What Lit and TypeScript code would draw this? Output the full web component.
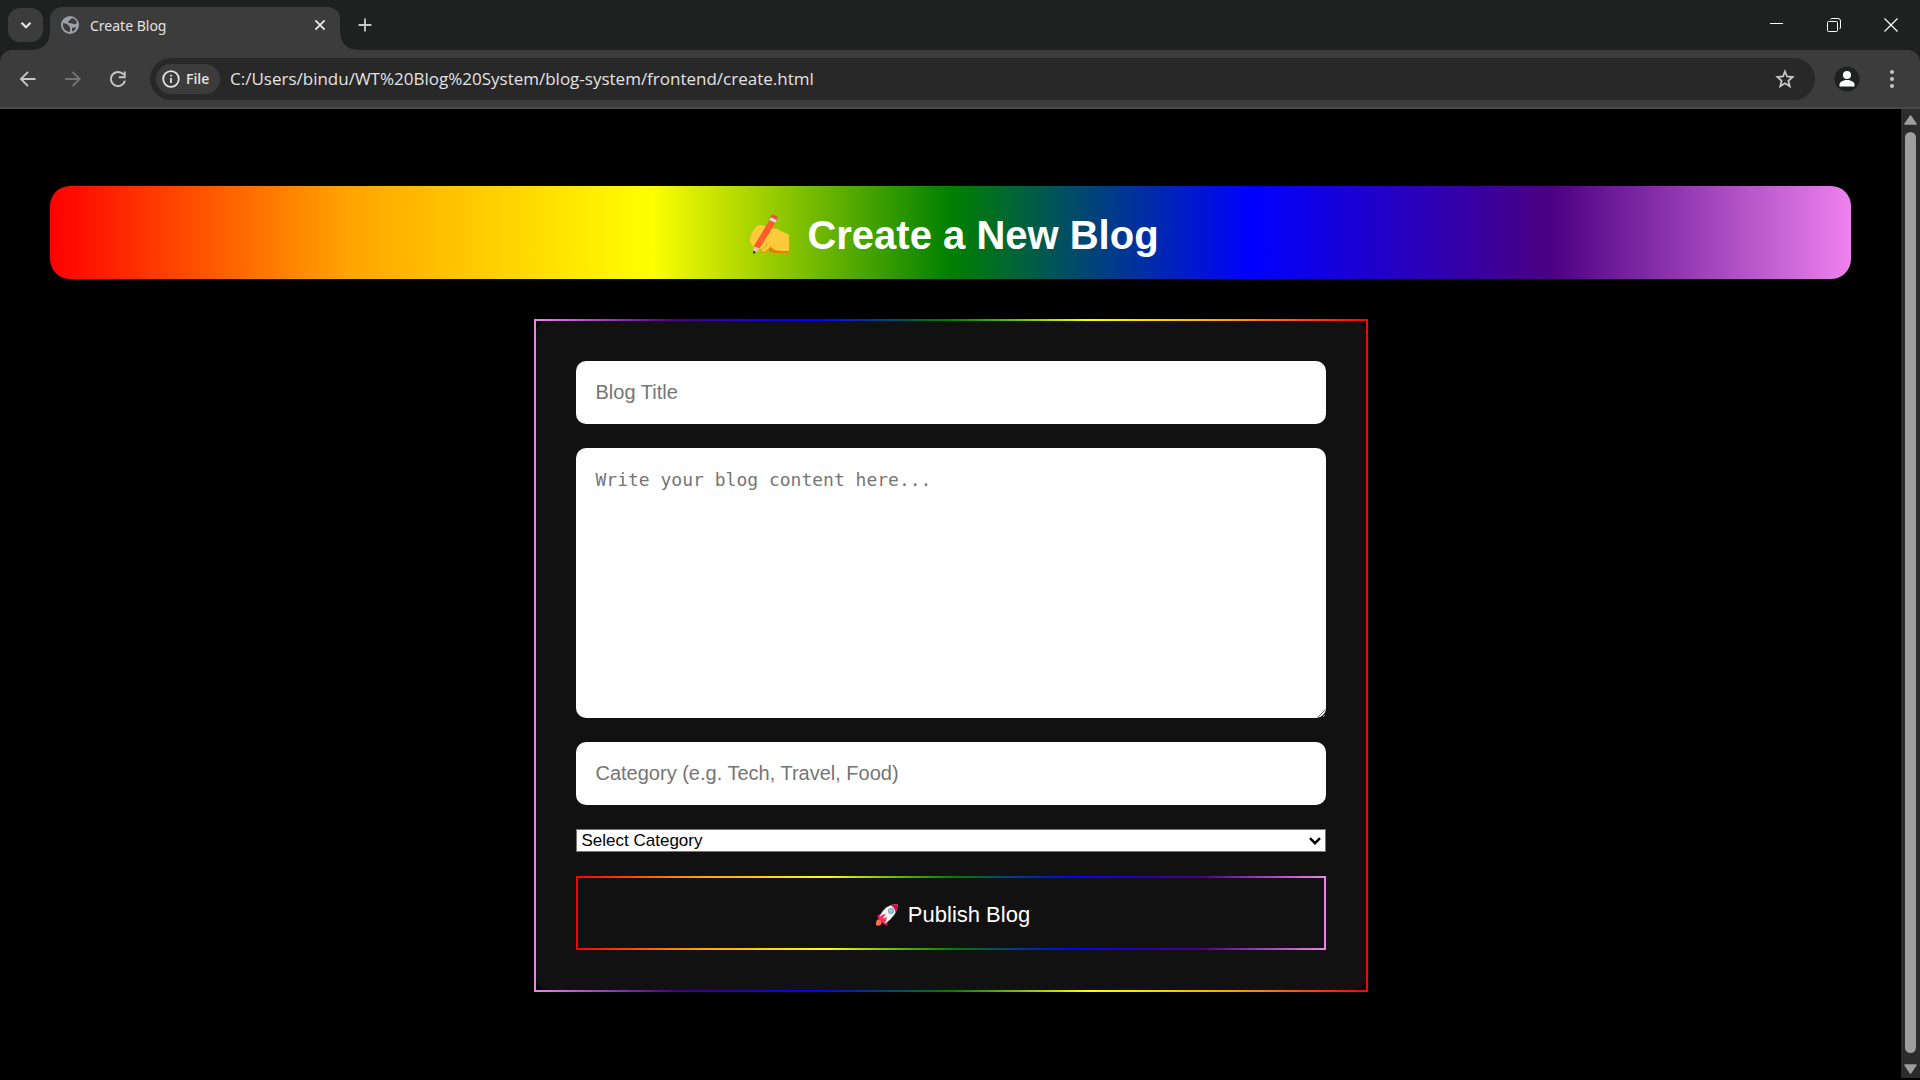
import { LitElement, html, css, svg } from "lit";
import { customElement, state } from "lit/decorators.js";

const glyph = (size: number, body: unknown) => html`
  <svg width=${size} height=${size} viewBox="0 0 24 24" fill="none" stroke="currentColor" stroke-width="2" aria-hidden="true">${body}</svg>
`;

@customElement("browser-tabs")
export class BrowserTabs extends LitElement {
  static styles = css`
    :host {
      display: flex;
      height: 50px;
      background: #1f2121;
      color: #e3e3e3;
      font-family: "Noto Sans", sans-serif;
    }
    button {
      display: grid;
      place-items: center;
      padding: 0;
      border: 0;
      background: none;
      color: inherit;
    }
    .search {
      width: 35px;
      height: 34px;
      margin: 8px 7px 0 8px;
      border-radius: 12px;
      background: #3c3c3c;
    }
    .tab {
      position: relative;
      display: flex;
      align-items: center;
      gap: 10px;
      width: 290px;
      height: 43px;
      margin-top: 7px;
      padding: 0 10px;
      box-sizing: border-box;
      border-radius: 12px 12px 0 0;
      background: #3c3c3c;
    }
    .tab::before,
    .tab::after {
      content: "";
      position: absolute;
      bottom: 0;
      width: 16px;
      height: 16px;
    }
    .tab::before {
      right: 100%;
      background: radial-gradient(circle at 0 0, transparent 15px, #3c3c3c 16px);
    }
    .tab::after {
      left: 100%;
      background: radial-gradient(circle at 100% 0, transparent 15px, #3c3c3c 16px);
    }
    .name {
      flex: 1;
      font-size: 14px;
      line-height: 20px;
      padding-bottom: 6px;
    }
    .tab svg {
      display: block;
      margin-bottom: 8px;
    }
    .add {
      width: 50px;
      color: #c7c7c7;
    }
    .windows {
      display: flex;
      margin-left: auto;
      padding-right: 1px;
    }
    .windows button {
      width: 57px;
      color: #ffffff;
    }
  `;

  render() {
    return html`
      <button class="search" aria-label="Search tabs">
        ${glyph(18, svg`<path d="m6 9 6 6 6-6" stroke-width="3"/>`)}
      </button>
      <div class="tab">
        <svg width="20" height="20" viewBox="0 0 20 20" aria-hidden="true">
          <circle cx="10" cy="10" r="9" fill="#9aa0a6" />
          <path d="M3 8 L7 9 L10 12 L10 17 Q5 16 3.5 13 Q2.5 10 3 8 Z M12 3 Q16 4 17 8 Q15 10 12.500 8.500 L9 8 Q7 7 9.500 5.500 Z M12 13 L16 12 Q15 16 12 16.500 Z" fill="#3c3c3c" />
        </svg>
        <span class="name">Create Blog</span>
        <button aria-label="Close tab">
          ${glyph(20, svg`<path d="M6.500 6.500 17.500 17.500M17.500 6.500 6.500 17.500" stroke-width="2.400"/>`)}
        </button>
      </div>
      <button class="add" aria-label="New tab">
        ${glyph(22, svg`<path d="M12 5v14M5 12h14"/>`)}
      </button>
      <div class="windows">
        <button aria-label="Minimize">
          <svg width="14" height="14" viewBox="0 0 14 14" stroke="#fff" aria-hidden="true"><path d="M0 5.500h13" /></svg>
        </button>
        <button aria-label="Restore">
          <svg width="14" height="14" viewBox="0 0 14 14" fill="none" stroke="#fff" aria-hidden="true">
            <rect x="0.500" y="3.500" width="10" height="10" rx="1" />
            <path d="M3.500 1.500Q4 0.500 5 0.500H11Q13.500 0.500 13.500 3V9Q13.500 10.500 12.500 11" />
          </svg>
        </button>
        <button aria-label="Close window">
          <svg width="14" height="14" viewBox="0 0 14 14" stroke="#fff" stroke-width="1.200" aria-hidden="true"><path d="M0.500 0.500l13 13M13.500 0.500l-13 13" /></svg>
        </button>
      </div>
    `;
  }
}

@customElement("browser-toolbar")
export class BrowserToolbar extends LitElement {
  static styles = css`
    :host {
      display: block;
      background: #1f2121;
      color: #c7c7c7;
      font-family: "Open Sans", sans-serif;
    }
    .bar {
      display: flex;
      align-items: center;
      height: 59px;
      padding: 0 6px 0 5px;
      box-sizing: border-box;
      border-bottom: 2px solid #4a4a4a;
      border-radius: 12px 12px 0 0;
      background: #3c3c3c;
    }
    button {
      display: grid;
      place-items: center;
      flex: none;
      width: 45px;
      height: 42px;
      padding: 0;
      border: 0;
      border-radius: 21px;
      background: none;
      color: inherit;
      font: inherit;
    }
    button[disabled] {
      color: #757575;
    }
    .address {
      display: flex;
      align-items: center;
      flex: 1;
      height: 42px;
      margin: 0 9px 0 10px;
      padding-left: 6px;
      border-radius: 21px;
      background: #282828;
    }
    .address .file {
      display: flex;
      align-items: center;
      gap: 6px;
      width: 64px;
      height: 30px;
      padding-left: 6px;
      background: #3c3c3c;
      color: #e3e3e3;
      font-size: 14px;
      font-weight: 600;
    }
    .address .star {
      width: 60px;
    }
    input {
      flex: 1;
      min-width: 0;
      padding: 0 10px;
      border: 0;
      outline: 0;
      background: none;
      color: #e3e3e3;
      font: 17px "Open Sans", sans-serif;
    }
    .nav {
      display: flex;
    }
  `;

  render() {
    return html`
      <div class="bar">
        <nav class="nav">
          <button aria-label="Back">${glyph(20, svg`<path d="M21 12H4M12 3.500 3.500 12 12 20.500" stroke-width="2.200"/>`)}</button>
          <button aria-label="Forward" disabled>${glyph(20, svg`<path d="M2.500 12h17M11.500 3.500 20 12 11.500 20.500" stroke-width="2.200"/>`)}</button>
          <button aria-label="Reload">
            ${glyph(20, svg`<path d="M18.500 6.500A8.500 8.500 0 1 0 20.300 14M20 3v7h-7" stroke-width="2.400"/>`)}
          </button>
        </nav>
        <div class="address">
          <button class="file">
            <svg width="18" height="18" viewBox="0 0 18 18" fill="none" stroke="#e3e3e3" stroke-width="1.800" aria-hidden="true">
              <circle cx="9" cy="9" r="7.800" /><path d="M9 8v5M9 4.800v1.800" />
            </svg>
            File
          </button>
          <input aria-label="Address" value="C:/Users/bindu/WT%20Blog%20System/blog-system/frontend/create.html" />
          <button class="star" aria-label="Bookmark this page">
            <svg width="20" height="20" viewBox="0 0 20 20" fill="none" stroke="currentColor" stroke-width="1.800" aria-hidden="true">
              <path d="M10 2.500 12 7.500 17.600 8 13.400 11.700 14.700 17.200 10 14.200 5.300 17.200 6.600 11.700 2.400 8 8 7.500Z" />
            </svg>
          </button>
        </div>
        <button aria-label="Profile">
          <svg width="26" height="26" viewBox="0 0 26 26" aria-hidden="true">
            <circle cx="13" cy="13" r="12.500" fill="#1f2121" />
            <circle cx="13" cy="9" r="4" fill="#fff" />
            <path d="M5.500 20.500v-2c0-3 4.500-4.500 7.500-4.500s7.500 1.500 7.500 4.500v2Z" fill="#fff" />
          </svg>
        </button>
        <button aria-label="Menu">
          <svg width="6" height="20" viewBox="0 0 6 20" fill="currentColor" aria-hidden="true">
            <circle cx="3" cy="3" r="2" /><circle cx="3" cy="10" r="2" /><circle cx="3" cy="17" r="2" />
          </svg>
        </button>
      </div>
    `;
  }
}

@customElement("blog-editor")
export class BlogEditor extends LitElement {
  @state() private category = "";

  static styles = css`
    :host {
      --rainbow: red, orange, yellow, green, blue, indigo, violet;
      display: block;
      padding: 77px 50px 0;
      color: #ffffff;
      font-family: "Liberation Sans", Arial, sans-serif;
    }
    .banner {
      display: flex;
      align-items: center;
      justify-content: center;
      gap: 13px;
      padding: 27px 24px 21px 30px;
      border-radius: 20px;
      background: linear-gradient(to right, var(--rainbow));
    }
    h1 {
      margin: 0;
      font-size: 40px;
      line-height: 45px;
    }
    form {
      display: flex;
      flex-direction: column;
      gap: 24px;
      max-width: 834px;
      margin: 40px auto;
      padding: 40px;
      box-sizing: border-box;
      border: 2px solid;
      border-image: linear-gradient(to left, var(--rainbow)) 1;
      border-radius: 20px;
      background: #111111;
    }
    .field {
      display: block;
      box-sizing: border-box;
      width: 100%;
      padding: 20px;
      border: 0;
      border-radius: 10px;
      outline: 0;
      background: #ffffff;
      color: #000000;
      font-family: inherit;
      font-size: 20px;
      line-height: 23px;
    }
    .field::placeholder {
      color: #757575;
    }
    input.field {
      height: 63px;
    }
    textarea.field {
      height: 270px;
      font-family: "DejaVu Sans Mono", monospace;
      font-size: 18px;
    }
    .picker {
      display: grid;
      align-items: center;
    }
    .picker > * {
      grid-area: 1 / 1;
    }
    .picker svg {
      justify-self: end;
      margin-right: 5px;
      pointer-events: none;
    }
    select {
      appearance: none;
      width: 100%;
      height: 23px;
      padding: 0 5px;
      border: 1px solid #767676;
      border-radius: 0;
      background: #ffffff;
      color: #000000;
      font-family: inherit;
      font-size: 17px;
    }
    .publish {
      display: flex;
      align-items: center;
      justify-content: center;
      gap: 9px;
      height: 74px;
      padding: 3px 0 0 4px;
      border: 2px solid;
      border-image: linear-gradient(to right, var(--rainbow)) 1;
      background: #111111;
      color: #ffffff;
      font-family: inherit;
      font-size: 22px;
    }
  `;

  private pick(e: Event) {
    this.category = (e.target as HTMLSelectElement).value;
  }

  render() {
    return html`
      <header class="banner">
        <svg width="46" height="44" viewBox="12 20 138 132" aria-hidden="true">
          <path d="M17 101 C18 88 28 60 43 54 Q54 51 66 57 L80 63 L98 64 L135 82 V136 H88 Q77 136 73 129 Q66 139 56 136 Q49 132 51 125 Q28 127 17 101Z" fill="#ffca3a" />
          <path d="M67 108 Q79 118 91 127 Q99 131 135 131 V137 H86 Q77 136 73 129 Q66 140 56 137 Q47 132 51 124 Q66 121 67 108Z" fill="#dd8500" />
          <path d="M51 125 Q67 121 71 108 L79 119 Q73 126 67 130 Q61 137 54 133Z" fill="#ffc83d" />
          <path d="M78 36 96 44 47 123 28 119Z" fill="#ff5b2b" />
          <path d="M75 35 82 24 Q85 20 90 23 L98 27 Q103 30 100 35 L95 45Z" fill="#fa4f35" />
          <path d="M80 30 98 38 94 46 76 38Z" fill="#dde0e3" />
          <path d="M30 117 46 125 31 138 27 136Z" fill="#f8c4b6" />
          <path d="M28 130 36 134 30 139 27 138Z" fill="#292929" />
        </svg>
        <h1>Create a New Blog</h1>
      </header>
      <form @submit=${(e: Event) => e.preventDefault()}>
        <input class="field" type="text" aria-label="Blog Title" placeholder="Blog Title" />
        <textarea class="field" aria-label="Blog content" placeholder="Write your blog content here..."></textarea>
        <input class="field" type="text" aria-label="Category" placeholder="Category (e.g. Tech, Travel, Food)" />
        <div class="picker">
          <select aria-label="Select Category" .value=${this.category} @change=${this.pick}>
            <option value="">Select Category</option>
          </select>
          <svg width="12" height="8" viewBox="0 0 12 8" fill="none" stroke="#000" stroke-width="2.400" aria-hidden="true">
            <path d="M1 1.200 6 6.200 11 1.200" />
          </svg>
        </div>
        <button class="publish" type="submit">
          <svg width="24" height="24" viewBox="14 13 72 72" aria-hidden="true">
            <path d="M20 64 Q24 59 31 65 Q37 72 31 78 Q25 83 17 80 Q15 71 20 64Z" fill="#ff7043" />
            <path d="M36 47 Q26 43 19 52 L29 66Z M51 62 Q55 76 48 82 L33 68Z" fill="#d30b50" />
            <path d="M81 17 Q83 32 72 48 Q60 65 43 75 L26 58 Q33 39 49 26 Q65 15 81 17Z" fill="#f4f4f6" />
            <path d="M81 17 Q83 32 75 42 Q75 28 61 20 Q71 15 81 17Z" fill="#d30b50" />
            <path d="M27 55 Q36 46 47 46 L38 57 Q44 62 49 53 Q50 66 41 75 L25 60Z" fill="#f92f60" />
            <circle cx="62" cy="37" r="8" fill="#83cbff" stroke="#9b9b9b" stroke-width="3" />
          </svg>
          <span>Publish Blog</span>
        </button>
      </form>
    `;
  }
}

@customElement("app-root")
export class AppRoot extends LitElement {
  static styles = css`
    :host {
      display: flex;
      flex-direction: column;
      min-height: 100vh;
      background: #000000;
    }
    .view {
      display: flex;
      flex: 1;
    }
    blog-editor {
      flex: 1;
    }
    .scroll {
      display: flex;
      flex-direction: column;
      align-items: center;
      gap: 7px;
      width: 19px;
      margin-bottom: 2px;
      padding: 6px 0 4px;
      box-sizing: border-box;
      background: #2c2c2c;
    }
    .scroll svg {
      display: block;
      flex: none;
    }
    .thumb {
      flex: 1;
      width: 11px;
      border-radius: 6px;
      background: #9f9f9f;
    }
    .end {
      margin-top: 4px;
    }
  `;

  render() {
    return html`
      <browser-tabs></browser-tabs>
      <browser-toolbar></browser-toolbar>
      <div class="view">
        <blog-editor></blog-editor>
        <div class="scroll" aria-hidden="true">
          <svg width="13" height="10" viewBox="0 0 13 10"><path d="M6.500 1 12 9H1Z" fill="#9f9f9f" stroke="#9f9f9f" stroke-width="1.500" stroke-linejoin="round" /></svg>
          <div class="thumb"></div>
          <svg class="end" width="13" height="10" viewBox="0 0 13 10"><path d="M6.500 9 12 1H1Z" fill="#9f9f9f" stroke="#9f9f9f" stroke-width="1.500" stroke-linejoin="round" /></svg>
        </div>
      </div>
    `;
  }
}
